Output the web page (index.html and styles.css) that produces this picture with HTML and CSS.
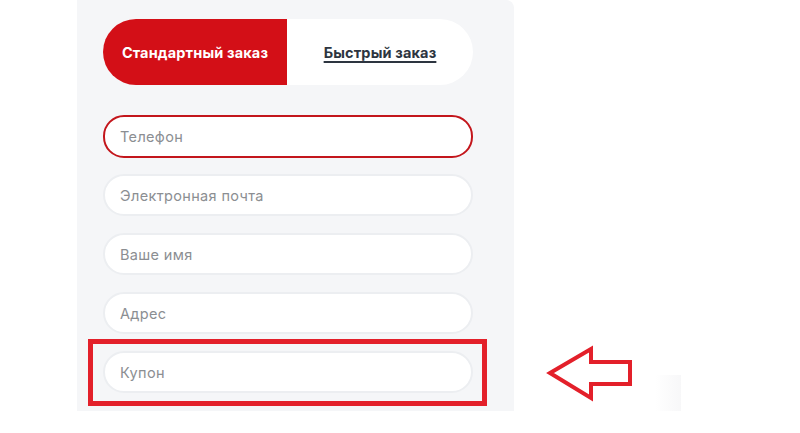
FILE: index.html
```html
<!DOCTYPE html>
<html lang="ru">
<head>
<meta charset="utf-8">
<title>Оформление заказа</title>
<link rel="stylesheet" href="styles.css">
</head>
<body>
<div class="page">
  <div class="panel">
    <div class="tabs">
      <div class="tab tab-active">Стандартный заказ</div>
      <div class="tab tab-link"><span>Быстрый заказ</span></div>
    </div>
    <div class="fields">
      <div class="field field-active">Телефон</div>
      <div class="field">Электронная почта</div>
      <div class="field">Ваше имя</div>
      <div class="field">Адрес</div>
      <div class="coupon">
        <div class="field">Купон</div>
        <div class="highlight"></div>
      </div>
    </div>
  </div>
  <svg class="arrow" width="100" height="70" viewBox="540 340 100 70">
    <polygon points="550,373 591,349 591,362 630,362 630,384 591,384 591,398" fill="none" stroke="#e3202a" stroke-width="4" stroke-linejoin="miter"/>
  </svg>
  <div class="shade"></div>
</div>
</body>
</html>
```
FILE: styles.css
```css
html, body {
  margin: 0;
  padding: 0;
  background: #ffffff;
}
body {
  font-family: Inter, "Noto Sans", sans-serif;
  width: 800px;
  height: 433px;
  overflow: hidden;
}
.page {
  position: relative;
  padding-left: 77px;
  height: 433px;
  box-sizing: border-box;
}
.panel {
  width: 437px;
  height: 411px;
  background: #f5f6f8;
  box-sizing: border-box;
  padding: 19px 41px 0 26px;
  border-top-right-radius: 8px;
}
.tabs {
  display: flex;
  height: 66px;
  border-radius: 33px;
  overflow: hidden;
  background: #ffffff;
}
.tab {
  display: flex;
  align-items: center;
  justify-content: center;
  font-size: 14.5px;
  font-weight: 700;
  letter-spacing: 0.15px;
}
.tab-active {
  width: 184px;
  background: #d30f17;
  color: #ffffff;
}
.tab-link {
  flex: 1;
  color: #2d3540;
}
.tab-link span {
  text-decoration: underline;
  text-underline-offset: 3px;
  text-decoration-thickness: 1.5px;
}
.fields {
  margin-top: 30px;
  display: flex;
  flex-direction: column;
  gap: 17px;
}
.field {
  height: 42px;
  box-sizing: border-box;
  border: 2px solid #eceef1;
  border-radius: 21px;
  background: #ffffff;
  padding-left: 15px;
  display: flex;
  align-items: center;
  font-size: 14.5px;
  letter-spacing: 0.35px;
  color: #8b8e92;
}
.field-active {
  height: 43px;
  margin-bottom: -1px;
  border-color: #c3161c;
}
.coupon {
  position: relative;
}
.highlight {
  position: absolute;
  left: -15px;
  top: -12px;
  width: 399px;
  height: 67px;
  box-sizing: border-box;
  border: 5px solid #e3202a;
}
.arrow {
  position: absolute;
  left: 540px;
  top: 340px;
}
.shade {
  position: absolute;
  left: 655px;
  top: 375px;
  width: 26px;
  height: 36px;
  background: linear-gradient(to right, rgba(244,244,246,0), rgba(244,244,246,0.7));
}
```
